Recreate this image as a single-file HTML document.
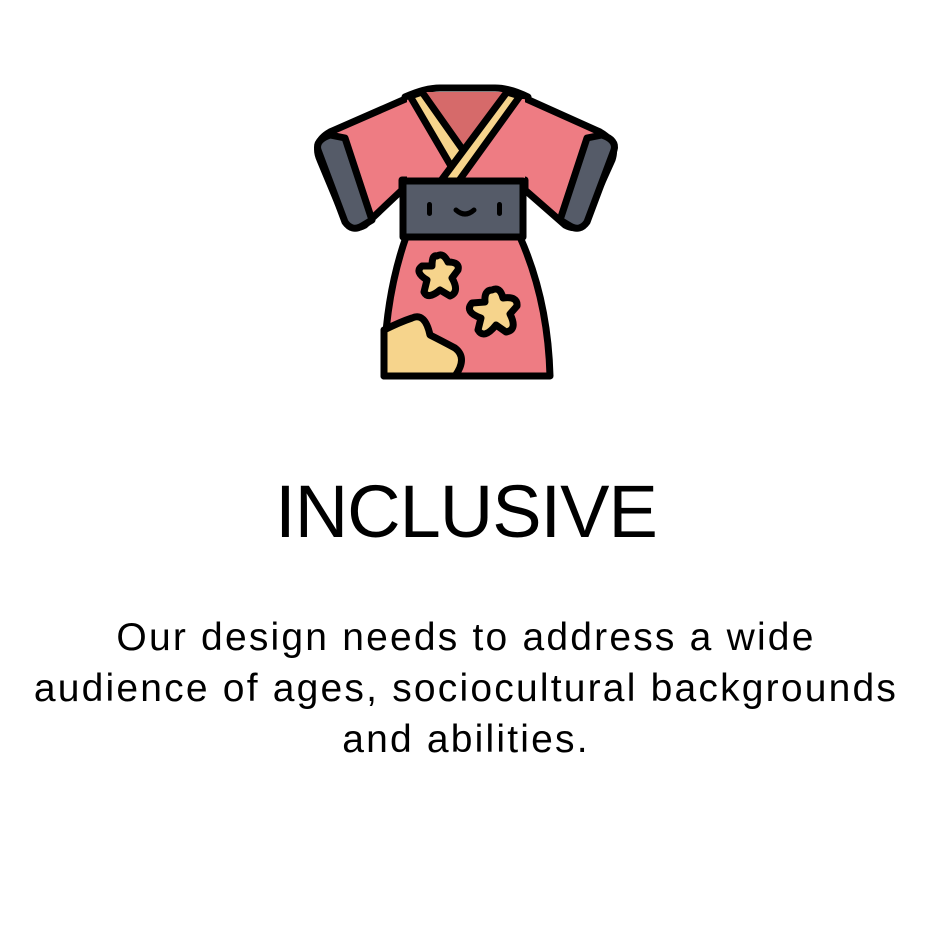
<!DOCTYPE html>
<html><head><meta charset="utf-8"><style>
html,body{margin:0;padding:0;background:#fff;width:932px;height:948px;overflow:hidden}
.t{position:absolute;left:0;width:932px;text-align:center;font-family:"Liberation Sans",sans-serif;color:#000}
</style></head><body>
<svg width="932" height="948" style="position:absolute;left:0;top:0" viewBox="0 0 932 948">
<g stroke="#000" stroke-width="7" stroke-linejoin="round" stroke-linecap="round">
<path d="M410,97 L330,132 Q312,142 320,160 L345,220 Q352,232 365,225 L402,190 L402,180 L440,180 Z" fill="#ee7c83"/>
<path d="M522,97 L600,132 Q618,142 612,160 L585,220 Q578,232 565,225 L525,190 L525,180 L490,180 Z" fill="#ee7c83"/>
<path d="M318,150 L345,222 Q352,232 362,226 L372,220 L345,138 L330,135 Q315,140 318,150 Z" fill="#555b68"/>
<path d="M614,150 L587,222 Q580,232 570,226 L560,220 L587,138 L602,135 Q617,140 614,150 Z" fill="#555b68"/>
<path d="M407,99 L407,182 L525,182 L525,99 Z" fill="#ee7c83" stroke="none"/>
<path d="M405,97 Q425,88 440,88 L495,88 Q510,88 528,97" fill="none"/>
<path d="M420,92 L465,165 L512,92 Z" fill="#d66a6a" stroke="none"/>
<path d="M410,96 L422,92 L470,160 L458,178 Z" fill="#f6d48c"/>
<path d="M520,96 L507,92 L440,182 L458,182 Z" fill="#f6d48c"/>
<path d="M406,237 L520,237 Q548,300 550,376 L384,376 Q384,300 406,237 Z" fill="#ee7c83"/>
<path d="M384,330 Q400,322 412,318 Q425,312 430,335 Q440,340 455,348 Q468,358 455,376 L384,376 Z" fill="#f6d48c"/>
<rect x="403" y="181" width="120" height="56" fill="#555b68"/>
<path d="M437,256 Q443,252 448,262 Q460,262 458,270 L452,278 Q460,292 450,296 L440,290 Q428,300 424,292 L427,280 Q414,272 422,266 L432,266 Q432,254 437,256 Z" fill="#f6d48c"/>
<path d="M492,290 Q500,286 503,298 Q518,296 517,306 L510,314 Q518,330 506,332 L496,325 Q484,340 478,330 L481,318 Q464,312 472,303 L485,302 Q484,290 492,290 Z" fill="#f6d48c"/>
</g>
<g fill="#000"><rect x="427" y="202" width="5" height="14" rx="2.5"/><rect x="497" y="202" width="5" height="14" rx="2.5"/></g>
<path d="M456,210 Q465,218 474,210" stroke="#000" stroke-width="5" fill="none" stroke-linecap="round"/>
</svg>
<div class="t" style="top:470px;font-size:74px;line-height:84px;letter-spacing:-1px">INCLUSIVE</div>
<div class="t" style="top:612px;font-size:39px;line-height:51px;letter-spacing:2.2px">Our design needs to address a wide<br>audience of ages, sociocultural backgrounds<br>and abilities.</div>
</body></html>
